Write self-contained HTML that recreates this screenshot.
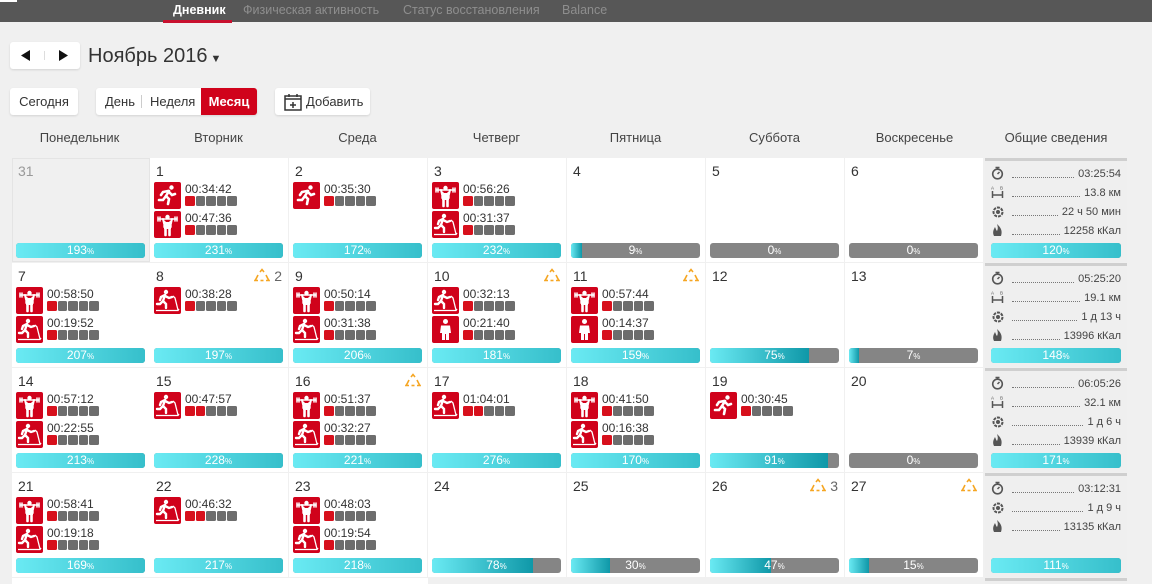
<!DOCTYPE html>
<html><head><meta charset="utf-8"><style>
*{margin:0;padding:0;box-sizing:border-box}
body{width:1152px;height:584px;overflow:hidden;background:#f0f0f0;font-family:"Liberation Sans",sans-serif;position:relative;color:#333}
.top{position:absolute;left:0;top:0;width:1152px;height:22px;background:#575757}
.tab{position:absolute;top:3px;font-size:12.5px;color:#8e8e8e}
.btn{position:absolute;background:#fff;border-radius:3px;box-shadow:0 1px 2px rgba(0,0,0,.12);font-size:13px;color:#333}
.wd{position:absolute;top:130px;width:139px;text-align:center;font-size:13px;color:#444}
.c{position:absolute;width:138px;height:104px;background:#fff}
.c.g{background:#f0f0f0;outline:1px solid #e4e4e4;outline-offset:-1px}
.d{position:absolute;left:6px;top:5px;font-size:14px;color:#333}
.c.g .d{color:#999}
.bar{position:absolute;left:4px;top:85px;width:129px;height:15px;border-radius:3px;background:#858585;overflow:hidden;color:#fff;font-size:12px;text-align:center;line-height:15px}
.bar i{position:absolute;left:0;top:0;bottom:0;background:linear-gradient(90deg,#6aeaf3,#0f98a8)}
.bar.f i{width:100%;background:linear-gradient(90deg,#6aeaf3,#36bfcb)}
.bar span{position:relative}
.bar small{font-size:8px}
.ic{position:absolute;left:4px;width:27px;height:27px;background:#d0021b;border-radius:2px}
.ic svg{width:27px;height:27px}
.t{position:absolute;left:35px;font-size:12px;color:#333}
.sq{position:absolute;left:35px;display:flex;gap:1px}
.sq b{width:9.5px;height:10px;background:#6d6d6d;border-radius:1.5px}
.sq b.r{background:#d7101c}
.w{position:absolute;right:6px;top:5px;font-size:14px;color:#666}
.w svg{vertical-align:-1px}
.s{position:absolute;left:985px;width:142px;height:104px;background:#efefef;border-top:3px solid #cfcfcf}
.ln{position:absolute;left:6px;right:6px;height:14px;font-size:11px;color:#444;display:flex;align-items:flex-end}
.ln svg{width:13px;height:14px;flex:none}
.ln .dots{flex:1;border-bottom:1px dotted #777;margin:0 4px 2px 8px}
.s .bar{left:6px;width:130px;top:82px}
</style></head><body>
<svg width="0" height="0" style="position:absolute">
<defs>
<symbol id="run" viewBox="0 0 27 27"><g stroke="#fff" stroke-width="2.6" stroke-linecap="round" fill="none"><path d="M15 9 L12 14 L15 17 L14 22"/><path d="M12 14 L9 18 L5 18"/><path d="M14 9 L9 10 L7 13"/><path d="M15 10 L18 13 L21 12"/></g><circle cx="17.5" cy="5.5" r="2.2" fill="#fff"/></symbol>
<symbol id="wt" viewBox="0 0 27 27"><circle cx="13.5" cy="6" r="2.2" fill="#fff"/><g stroke="#fff" fill="none" stroke-linecap="round"><path d="M4 8 H23" stroke-width="1.5"/><path d="M4 6 V10 M6 6 V10 M21 6 V10 M23 6 V10" stroke-width="1.5"/><path d="M9 8 L10 12 H17 L18 8" stroke-width="2"/><path d="M10.5 11 V16 M16.5 11 V16" stroke-width="2.4"/><path d="M11.5 16 V24 M15.5 16 V24" stroke-width="2.6"/><path d="M11 12 H16 V17 H11Z" stroke-width="2" fill="#fff"/></g></symbol>
<symbol id="tm" viewBox="0 0 27 27"><circle cx="12" cy="5" r="2.2" fill="#fff"/><g stroke="#fff" stroke-width="2.4" stroke-linecap="round" fill="none"><path d="M11 8 L9 14 L12 17 L12 21"/><path d="M9 14 L6 17 L3 17"/><path d="M11 8 L7 10 L6 13"/><path d="M11 9 L15 11 L18 10"/></g><g stroke="#fff" stroke-width="1.3" fill="none"><path d="M2 23.5 H24 L25 22"/><path d="M19 9 L21 11 L24 23"/></g></symbol>
<symbol id="ps" viewBox="0 0 27 27"><circle cx="13.5" cy="5.5" r="2.5" fill="#fff"/><path d="M9 9.5 H18 L19 17 H17 V24 H14 V18 H13 V24 H10 V17 H8Z" fill="#fff"/></symbol>
<symbol id="wr" viewBox="0 0 16 14"><g stroke="#f5a623" stroke-width="1.6" fill="none"><path d="M6 4 L8 1.5 L10 4"/><path d="M4 7 L2 11 L1 12.5 H4"/><path d="M12 7 L14 11 L15 12.5 H12"/><path d="M6.5 12.5 H9.5"/></g></symbol>
<symbol id="sw" viewBox="0 0 13 14"><circle cx="6.5" cy="8" r="4.8" stroke="#555" stroke-width="1.6" fill="none"/><path d="M4.5 1.5 H8.5 M6.5 1.5 V3 M6.5 8 L8.5 6" stroke="#555" stroke-width="1.5"/></symbol>
<symbol id="ds" viewBox="0 0 13 14"><path d="M1.5 6 V13 M11.5 6 V13 M1.5 10 H11.5" stroke="#555" stroke-width="1.5"/><text x="0" y="4.5" font-size="4.5" fill="#555" font-family="Liberation Sans">A</text><text x="9" y="4.5" font-size="4.5" fill="#555" font-family="Liberation Sans">B</text></symbol>
<symbol id="rc" viewBox="0 0 13 14"><circle cx="7" cy="8" r="4.5" stroke="#555" stroke-width="2" fill="none" stroke-dasharray="3 1"/><circle cx="7" cy="8" r="2" fill="#555"/></symbol>
<symbol id="fl" viewBox="0 0 13 14"><path d="M6 1 C9 4 12 7 10 13 H3 C1 9 3 6 4 4 C5 6 5 7 6 8 C7 6 7 4 6 1Z" fill="#555"/></symbol>
</defs></svg>

<div class="top"></div>
<div style="position:absolute;left:0;top:0;width:17px;height:2px;background:#fff"></div>
<div class="tab" style="left:173px;color:#fff;font-weight:bold">Дневник</div>
<div style="position:absolute;left:163px;top:20px;width:69px;height:3px;background:#c8102e"></div>
<div class="tab" style="left:243px">Физическая активность</div>
<div class="tab" style="left:403px">Статус восстановления</div>
<div class="tab" style="left:562px">Balance</div>

<div class="btn" style="left:10px;top:42px;width:70px;height:27px"><svg width="70" height="27"><path d="M11 13.5 L20 8 V19Z" fill="#111"/><path d="M34.5 9 V18" stroke="#ddd"/><path d="M58 13.5 L49 8 V19Z" fill="#111"/></svg></div>
<div style="position:absolute;left:88px;top:45px;font-size:20px;color:#333">Ноябрь 2016<span style="font-size:11px"> ▼</span></div>

<div class="btn" style="left:10px;top:88px;width:68px;height:27px;line-height:27px;text-align:center">Сегодня</div>
<div class="btn" style="left:96px;top:88px;width:161px;height:27px;line-height:27px"><span style="position:absolute;left:9px">День</span><span style="position:absolute;left:45px;top:7px;width:1px;height:13px;background:#ccc"></span><span style="position:absolute;left:54px">Неделя</span><span style="position:absolute;left:105px;top:0;width:56px;height:27px;background:#d0021b;color:#fff;border-radius:0 3px 3px 0;text-align:center;font-weight:bold">Месяц</span></div>
<div class="btn" style="left:275px;top:88px;width:95px;height:27px;line-height:27px"><svg style="position:absolute;left:9px;top:5px" width="18" height="18"><rect x="1" y="3" width="16" height="14" fill="none" stroke="#333" stroke-width="1.5"/><path d="M1 6 H17 M5 1 V4 M13 1 V4 M9 9 V15 M6 12 H12" stroke="#333" stroke-width="1.5"/></svg><span style="position:absolute;left:31px">Добавить</span></div>

<div class="wd" style="left:10px">Понедельник</div>
<div class="wd" style="left:149px">Вторник</div>
<div class="wd" style="left:288px">Среда</div>
<div class="wd" style="left:427px">Четверг</div>
<div class="wd" style="left:566px">Пятница</div>
<div class="wd" style="left:705px">Суббота</div>
<div class="wd" style="left:845px">Воскресенье</div>
<div class="wd" style="left:985px;width:142px">Общие сведения</div>

<!-- Row 1 -->
<div class="c g" style="left:12px;top:158px"><div class="d">31</div><div class="bar f"><i></i><span>193<small>%</small></span></div></div>
<div class="c" style="left:150px;top:158px"><div class="d">1</div>
<div class="ic" style="top:24px"><svg><use href="#run"/></svg></div><div class="t" style="top:24px">00:34:42</div><div class="sq" style="top:38px"><b class="r"></b><b></b><b></b><b></b><b></b></div>
<div class="ic" style="top:53px"><svg><use href="#wt"/></svg></div><div class="t" style="top:53px">00:47:36</div><div class="sq" style="top:67px"><b class="r"></b><b></b><b></b><b></b><b></b></div>
<div class="bar f"><i></i><span>231<small>%</small></span></div></div>
<div class="c" style="left:289px;top:158px"><div class="d">2</div>
<div class="ic" style="top:24px"><svg><use href="#run"/></svg></div><div class="t" style="top:24px">00:35:30</div><div class="sq" style="top:38px"><b class="r"></b><b></b><b></b><b></b><b></b></div>
<div class="bar f"><i></i><span>172<small>%</small></span></div></div>
<div class="c" style="left:428px;top:158px"><div class="d">3</div>
<div class="ic" style="top:24px"><svg><use href="#wt"/></svg></div><div class="t" style="top:24px">00:56:26</div><div class="sq" style="top:38px"><b class="r"></b><b></b><b></b><b></b><b></b></div>
<div class="ic" style="top:53px"><svg><use href="#tm"/></svg></div><div class="t" style="top:53px">00:31:37</div><div class="sq" style="top:67px"><b class="r"></b><b></b><b></b><b></b><b></b></div>
<div class="bar f"><i></i><span>232<small>%</small></span></div></div>
<div class="c" style="left:567px;top:158px"><div class="d">4</div><div class="bar"><i style="width:11px"></i><span>9<small>%</small></span></div></div>
<div class="c" style="left:706px;top:158px"><div class="d">5</div><div class="bar"><span>0<small>%</small></span></div></div>
<div class="c" style="left:845px;top:158px"><div class="d">6</div><div class="bar"><span>0<small>%</small></span></div></div>
<div class="s" style="top:158px">
<div class="ln" style="top:5px"><svg><use href="#sw"/></svg><span class="dots"></span>03:25:54</div>
<div class="ln" style="top:24px"><svg><use href="#ds"/></svg><span class="dots"></span>13.8 км</div>
<div class="ln" style="top:43px"><svg><use href="#rc"/></svg><span class="dots"></span>22 ч 50 мин</div>
<div class="ln" style="top:62px"><svg><use href="#fl"/></svg><span class="dots"></span>12258 кКал</div>
<div class="bar f"><i></i><span>120<small>%</small></span></div></div>

<!-- Row 2 -->
<div class="c" style="left:12px;top:263px"><div class="d">7</div>
<div class="ic" style="top:24px"><svg><use href="#wt"/></svg></div><div class="t" style="top:24px">00:58:50</div><div class="sq" style="top:38px"><b class="r"></b><b></b><b></b><b></b><b></b></div>
<div class="ic" style="top:53px"><svg><use href="#tm"/></svg></div><div class="t" style="top:53px">00:19:52</div><div class="sq" style="top:67px"><b class="r"></b><b></b><b></b><b></b><b></b></div>
<div class="bar f"><i></i><span>207<small>%</small></span></div></div>
<div class="c" style="left:150px;top:263px"><div class="d">8</div><div class="w"><svg width="16" height="14"><use href="#wr"/></svg> 2</div>
<div class="ic" style="top:24px"><svg><use href="#tm"/></svg></div><div class="t" style="top:24px">00:38:28</div><div class="sq" style="top:38px"><b class="r"></b><b></b><b></b><b></b><b></b></div>
<div class="bar f"><i></i><span>197<small>%</small></span></div></div>
<div class="c" style="left:289px;top:263px"><div class="d">9</div>
<div class="ic" style="top:24px"><svg><use href="#wt"/></svg></div><div class="t" style="top:24px">00:50:14</div><div class="sq" style="top:38px"><b class="r"></b><b></b><b></b><b></b><b></b></div>
<div class="ic" style="top:53px"><svg><use href="#tm"/></svg></div><div class="t" style="top:53px">00:31:38</div><div class="sq" style="top:67px"><b class="r"></b><b></b><b></b><b></b><b></b></div>
<div class="bar f"><i></i><span>206<small>%</small></span></div></div>
<div class="c" style="left:428px;top:263px"><div class="d">10</div><div class="w"><svg width="16" height="14"><use href="#wr"/></svg></div>
<div class="ic" style="top:24px"><svg><use href="#tm"/></svg></div><div class="t" style="top:24px">00:32:13</div><div class="sq" style="top:38px"><b class="r"></b><b></b><b></b><b></b><b></b></div>
<div class="ic" style="top:53px"><svg><use href="#ps"/></svg></div><div class="t" style="top:53px">00:21:40</div><div class="sq" style="top:67px"><b class="r"></b><b></b><b></b><b></b><b></b></div>
<div class="bar f"><i></i><span>181<small>%</small></span></div></div>
<div class="c" style="left:567px;top:263px"><div class="d">11</div><div class="w"><svg width="16" height="14"><use href="#wr"/></svg></div>
<div class="ic" style="top:24px"><svg><use href="#wt"/></svg></div><div class="t" style="top:24px">00:57:44</div><div class="sq" style="top:38px"><b class="r"></b><b></b><b></b><b></b><b></b></div>
<div class="ic" style="top:53px"><svg><use href="#ps"/></svg></div><div class="t" style="top:53px">00:14:37</div><div class="sq" style="top:67px"><b class="r"></b><b></b><b></b><b></b><b></b></div>
<div class="bar f"><i></i><span>159<small>%</small></span></div></div>
<div class="c" style="left:706px;top:263px"><div class="d">12</div><div class="bar"><i style="width:99px"></i><span>75<small>%</small></span></div></div>
<div class="c" style="left:845px;top:263px"><div class="d">13</div><div class="bar"><i style="width:10px"></i><span>7<small>%</small></span></div></div>
<div class="s" style="top:263px">
<div class="ln" style="top:5px"><svg><use href="#sw"/></svg><span class="dots"></span>05:25:20</div>
<div class="ln" style="top:24px"><svg><use href="#ds"/></svg><span class="dots"></span>19.1 км</div>
<div class="ln" style="top:43px"><svg><use href="#rc"/></svg><span class="dots"></span>1 д 13 ч</div>
<div class="ln" style="top:62px"><svg><use href="#fl"/></svg><span class="dots"></span>13996 кКал</div>
<div class="bar f"><i></i><span>148<small>%</small></span></div></div>

<!-- Row 3 -->
<div class="c" style="left:12px;top:368px"><div class="d">14</div>
<div class="ic" style="top:24px"><svg><use href="#wt"/></svg></div><div class="t" style="top:24px">00:57:12</div><div class="sq" style="top:38px"><b class="r"></b><b></b><b></b><b></b><b></b></div>
<div class="ic" style="top:53px"><svg><use href="#tm"/></svg></div><div class="t" style="top:53px">00:22:55</div><div class="sq" style="top:67px"><b class="r"></b><b></b><b></b><b></b><b></b></div>
<div class="bar f"><i></i><span>213<small>%</small></span></div></div>
<div class="c" style="left:150px;top:368px"><div class="d">15</div>
<div class="ic" style="top:24px"><svg><use href="#tm"/></svg></div><div class="t" style="top:24px">00:47:57</div><div class="sq" style="top:38px"><b class="r"></b><b class="r"></b><b></b><b></b><b></b></div>
<div class="bar f"><i></i><span>228<small>%</small></span></div></div>
<div class="c" style="left:289px;top:368px"><div class="d">16</div><div class="w"><svg width="16" height="14"><use href="#wr"/></svg></div>
<div class="ic" style="top:24px"><svg><use href="#wt"/></svg></div><div class="t" style="top:24px">00:51:37</div><div class="sq" style="top:38px"><b class="r"></b><b></b><b></b><b></b><b></b></div>
<div class="ic" style="top:53px"><svg><use href="#tm"/></svg></div><div class="t" style="top:53px">00:32:27</div><div class="sq" style="top:67px"><b class="r"></b><b></b><b></b><b></b><b></b></div>
<div class="bar f"><i></i><span>221<small>%</small></span></div></div>
<div class="c" style="left:428px;top:368px"><div class="d">17</div>
<div class="ic" style="top:24px"><svg><use href="#tm"/></svg></div><div class="t" style="top:24px">01:04:01</div><div class="sq" style="top:38px"><b class="r"></b><b class="r"></b><b></b><b></b><b></b></div>
<div class="bar f"><i></i><span>276<small>%</small></span></div></div>
<div class="c" style="left:567px;top:368px"><div class="d">18</div>
<div class="ic" style="top:24px"><svg><use href="#wt"/></svg></div><div class="t" style="top:24px">00:41:50</div><div class="sq" style="top:38px"><b class="r"></b><b></b><b></b><b></b><b></b></div>
<div class="ic" style="top:53px"><svg><use href="#tm"/></svg></div><div class="t" style="top:53px">00:16:38</div><div class="sq" style="top:67px"><b class="r"></b><b></b><b></b><b></b><b></b></div>
<div class="bar f"><i></i><span>170<small>%</small></span></div></div>
<div class="c" style="left:706px;top:368px"><div class="d">19</div>
<div class="ic" style="top:24px"><svg><use href="#run"/></svg></div><div class="t" style="top:24px">00:30:45</div><div class="sq" style="top:38px"><b class="r"></b><b></b><b></b><b></b><b></b></div>
<div class="bar"><i style="width:118px"></i><span>91<small>%</small></span></div></div>
<div class="c" style="left:845px;top:368px"><div class="d">20</div><div class="bar"><span>0<small>%</small></span></div></div>
<div class="s" style="top:368px">
<div class="ln" style="top:5px"><svg><use href="#sw"/></svg><span class="dots"></span>06:05:26</div>
<div class="ln" style="top:24px"><svg><use href="#ds"/></svg><span class="dots"></span>32.1 км</div>
<div class="ln" style="top:43px"><svg><use href="#rc"/></svg><span class="dots"></span>1 д 6 ч</div>
<div class="ln" style="top:62px"><svg><use href="#fl"/></svg><span class="dots"></span>13939 кКал</div>
<div class="bar f"><i></i><span>171<small>%</small></span></div></div>

<!-- Row 4 -->
<div class="c" style="left:12px;top:473px"><div class="d">21</div>
<div class="ic" style="top:24px"><svg><use href="#wt"/></svg></div><div class="t" style="top:24px">00:58:41</div><div class="sq" style="top:38px"><b class="r"></b><b></b><b></b><b></b><b></b></div>
<div class="ic" style="top:53px"><svg><use href="#tm"/></svg></div><div class="t" style="top:53px">00:19:18</div><div class="sq" style="top:67px"><b class="r"></b><b></b><b></b><b></b><b></b></div>
<div class="bar f"><i></i><span>169<small>%</small></span></div></div>
<div class="c" style="left:150px;top:473px"><div class="d">22</div>
<div class="ic" style="top:24px"><svg><use href="#tm"/></svg></div><div class="t" style="top:24px">00:46:32</div><div class="sq" style="top:38px"><b class="r"></b><b class="r"></b><b></b><b></b><b></b></div>
<div class="bar f"><i></i><span>217<small>%</small></span></div></div>
<div class="c" style="left:289px;top:473px"><div class="d">23</div>
<div class="ic" style="top:24px"><svg><use href="#wt"/></svg></div><div class="t" style="top:24px">00:48:03</div><div class="sq" style="top:38px"><b class="r"></b><b></b><b></b><b></b><b></b></div>
<div class="ic" style="top:53px"><svg><use href="#tm"/></svg></div><div class="t" style="top:53px">00:19:54</div><div class="sq" style="top:67px"><b class="r"></b><b></b><b></b><b></b><b></b></div>
<div class="bar f"><i></i><span>218<small>%</small></span></div></div>
<div class="c" style="left:428px;top:473px"><div class="d">24</div><div class="bar"><i style="width:101px"></i><span>78<small>%</small></span></div></div>
<div class="c" style="left:567px;top:473px"><div class="d">25</div><div class="bar"><i style="width:39px"></i><span>30<small>%</small></span></div></div>
<div class="c" style="left:706px;top:473px"><div class="d">26</div><div class="w"><svg width="16" height="14"><use href="#wr"/></svg> 3</div><div class="bar"><i style="width:61px"></i><span>47<small>%</small></span></div></div>
<div class="c" style="left:845px;top:473px"><div class="d">27</div><div class="w"><svg width="16" height="14"><use href="#wr"/></svg></div><div class="bar"><i style="width:20px"></i><span>15<small>%</small></span></div></div>
<div class="s" style="top:473px">
<div class="ln" style="top:5px"><svg><use href="#sw"/></svg><span class="dots"></span>03:12:31</div>
<div class="ln" style="top:24px"><svg><use href="#rc"/></svg><span class="dots"></span>1 д 9 ч</div>
<div class="ln" style="top:43px"><svg><use href="#fl"/></svg><span class="dots"></span>13135 кКал</div>
<div class="bar f"><i></i><span>111<small>%</small></span></div></div>

<div style="position:absolute;left:12px;top:578px;width:416px;height:6px;background:#fff"></div>
<div class="s" style="top:578px;height:6px"></div>
</body></html>
